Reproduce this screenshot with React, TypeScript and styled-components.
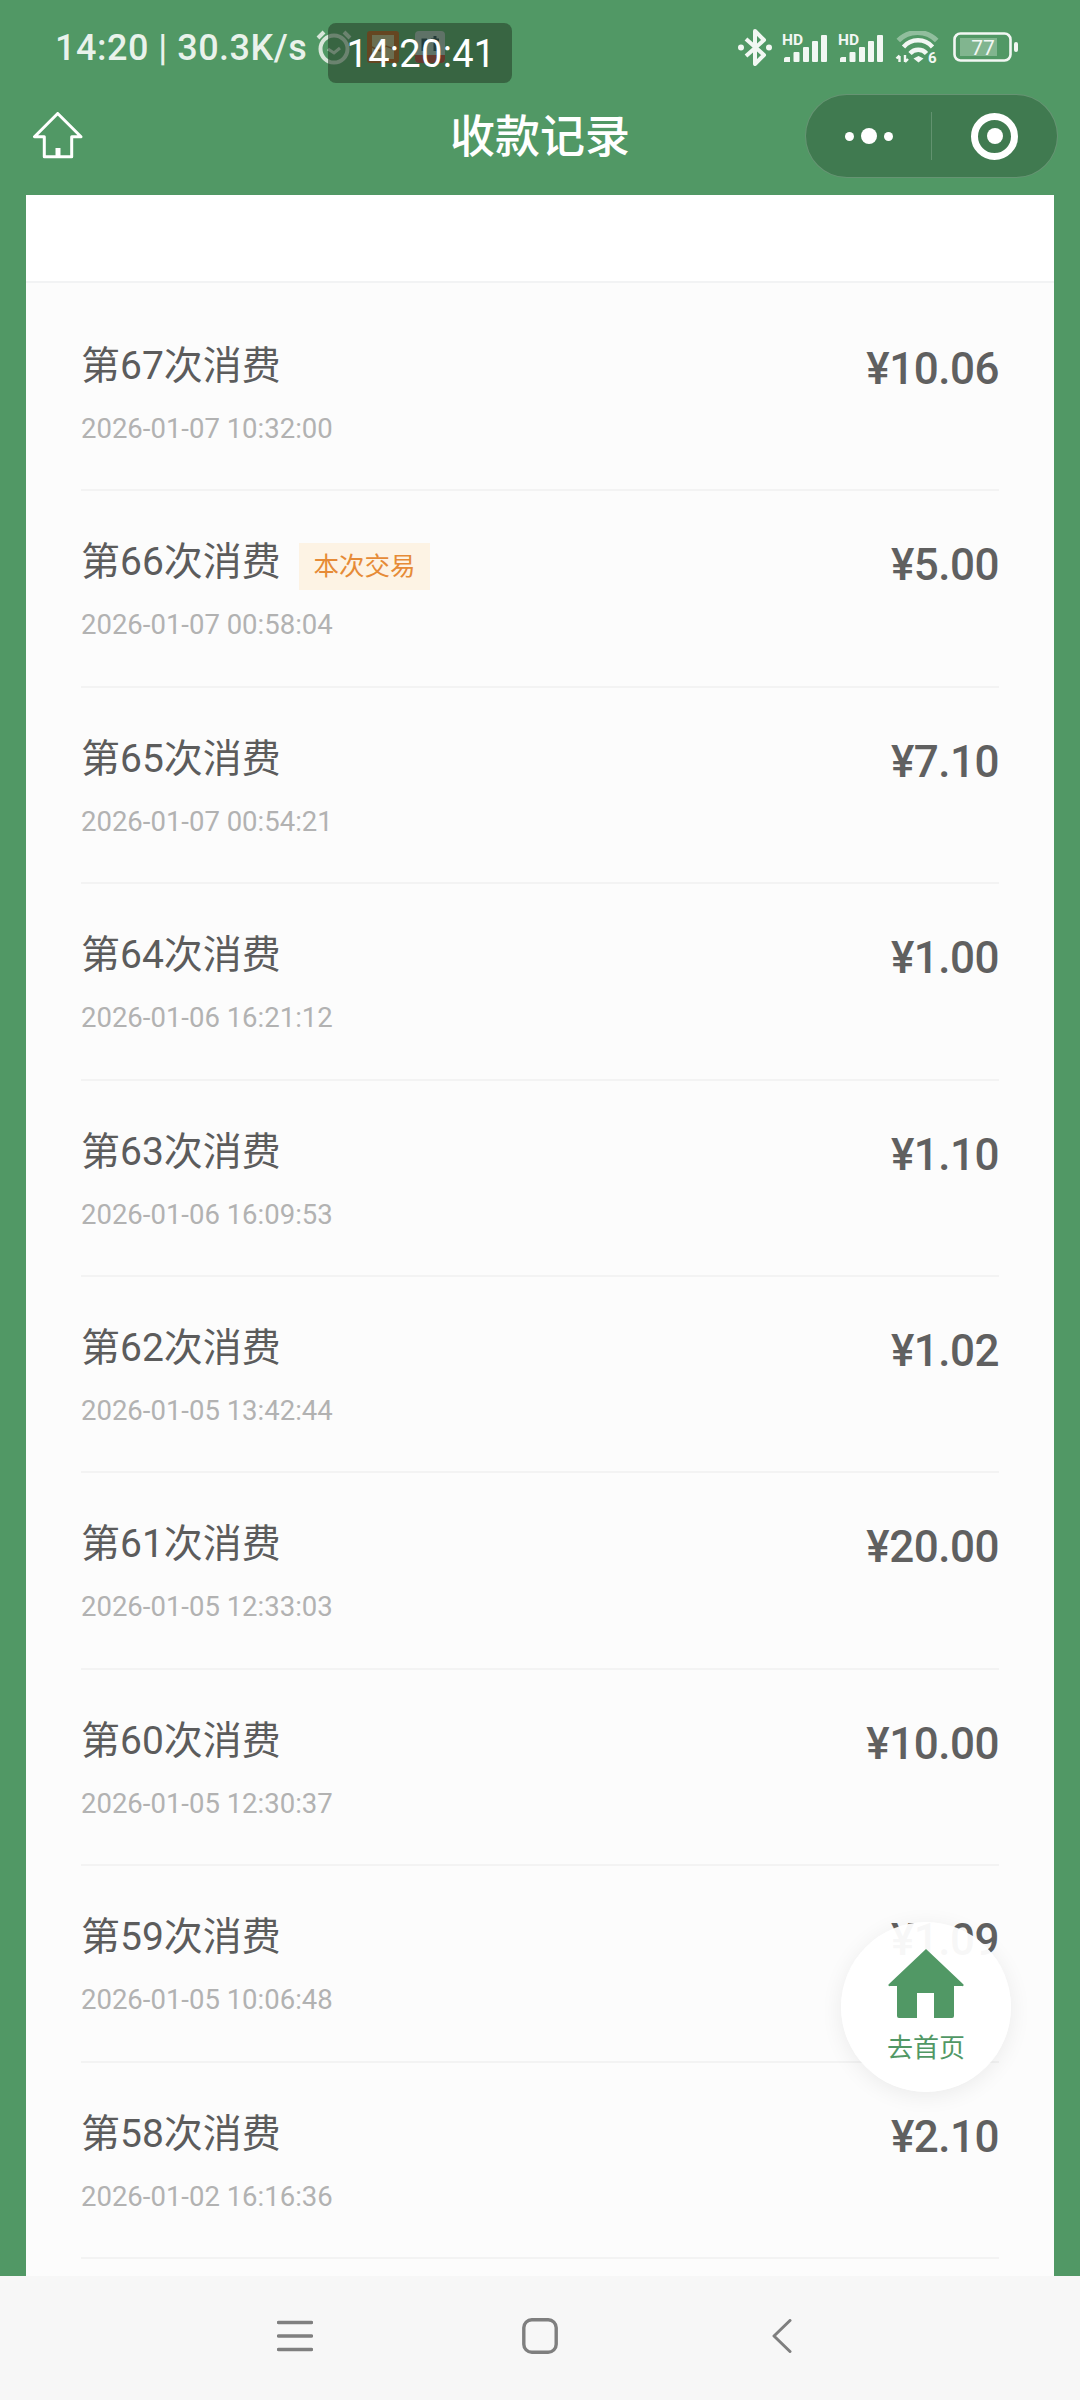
import styled, { createGlobalStyle } from "styled-components";

const GlobalStyle = createGlobalStyle`
  html, body {
    margin: 0;
    padding: 0;
    background: #52985f;
  }
  * {
    box-sizing: border-box;
  }
`;

const FONT = `Roboto, "Noto Sans CJK SC", sans-serif`;

const Page = styled.div`
  width: 1080px;
  height: 2400px;
  position: relative;
  display: flex;
  flex-direction: column;
  overflow: hidden;
  background: #519865;
  font-family: ${FONT};
`;

const StatusBar = styled.div`
  height: 94px;
  flex: none;
  padding: 28px 61px 0 55px;
  display: flex;
  justify-content: space-between;
  align-items: flex-start;
  color: rgba(255, 255, 255, 0.88);
`;

const StatusLeft = styled.div`
  display: flex;
  align-items: center;
  height: 38px;
`;

const StatusText = styled.span`
  margin-top: 2px;
  font-size: 36px;
  font-weight: 500;
  line-height: 38px;
  white-space: nowrap;
  letter-spacing: 0.5px;
`;

const AppIcon = styled.svg<{ $gap: number }>`
  flex: none;
  margin-left: ${(p) => p.$gap}px;
`;

const StatusRight = styled.div`
  display: flex;
  align-items: center;
  gap: 9px;
  height: 38px;
`;

const TimePill = styled.div`
  position: absolute;
  left: 328px;
  top: 23px;
  width: 184px;
  height: 60px;
  padding-left: 2px;
  border-radius: 8px;
  background: rgba(40, 70, 45, 0.62);
  color: #fff;
  font-size: 38px;
  line-height: 62px;
  text-align: center;
  letter-spacing: 0.3px;
`;

const NavBar = styled.div`
  height: 101px;
  flex: none;
  position: relative;
  display: flex;
  align-items: center;
  justify-content: space-between;
  padding: 0 22px 0 33px;
`;

const NavTitle = styled.div`
  position: absolute;
  left: 0;
  right: 0;
  top: 18px;
  text-align: center;
  color: #fff;
  font-size: 45px;
  font-weight: 500;
  line-height: 52px;
`;

const Capsule = styled.div`
  width: 253px;
  height: 84px;
  margin-bottom: 17px;
  border-radius: 42px;
  background: #407a50;
  border: 1px solid rgba(255, 255, 255, 0.2);
  display: flex;
  align-items: center;
`;

const CapsuleSide = styled.div<{ $wide: boolean }>`
  height: 48px;
  width: ${(p) => (p.$wide ? 127 : 126)}px;
  display: flex;
  align-items: center;
  justify-content: center;
  border-right: ${(p) => (p.$wide ? "1px solid rgba(255,255,255,0.18)" : "none")};
`;

const Dots = styled.div`
  display: flex;
  align-items: center;
  gap: 7px;
`;

const Dot = styled.span<{ $size: number }>`
  width: ${(p) => p.$size}px;
  height: ${(p) => p.$size}px;
  border-radius: 50%;
  background: #fff;
`;

const Target = styled.div`
  width: 47px;
  height: 47px;
  border-radius: 50%;
  border: 7.5px solid #fff;
  display: flex;
  align-items: center;
  justify-content: center;

  &::after {
    content: "";
    width: 16px;
    height: 16px;
    border-radius: 50%;
    background: #fff;
  }
`;

const Card = styled.div`
  flex: 1;
  min-height: 0;
  margin: 0 26px;
  background: #fcfcfc;
  overflow: hidden;
`;

const CardHead = styled.div`
  height: 88px;
  background: #fff;
  border-bottom: 2px solid #f2f3f4;
`;

const List = styled.div`
  padding: 12px 55px 0 55px;
`;

const Row = styled.div`
  height: 196.4px;
  padding-top: 49px;
  display: flex;
  justify-content: space-between;
  align-items: flex-start;
  border-bottom: 2px solid #f3f3f3;
`;

const RowTitleLine = styled.div`
  display: flex;
  align-items: center;
  height: 44px;
`;

const RowTitle = styled.span`
  font-size: 39px;
  line-height: 44px;
  color: #5c5c5c;
`;

const Tag = styled.span`
  margin-left: 18px;
  margin-top: 9px;
  height: 47px;
  padding: 0 14.5px;
  background: #fdf3e4;
  color: #e68b37;
  font-size: 25.5px;
  line-height: 46px;
`;

const RowDate = styled.div`
  margin-top: 23px;
  font-size: 27.5px;
  line-height: 36px;
  color: #b2b2b2;
`;

const Amount = styled.div`
  margin-top: 3px;
  font-size: 44px;
  font-weight: 500;
  line-height: 44px;
  letter-spacing: -0.5px;
  color: #606060;
`;

const HomeButton = styled.div`
  position: absolute;
  left: 841px;
  top: 1922px;
  width: 170px;
  height: 170px;
  border-radius: 50%;
  background: rgba(255, 255, 255, 0.95);
  box-shadow: 0 4px 22px rgba(0, 0, 0, 0.07);
  display: flex;
  flex-direction: column;
  align-items: center;
  padding-top: 27px;
`;

const HomeLabel = styled.div`
  margin-top: 12px;
  font-size: 26px;
  line-height: 34px;
  color: #519865;
`;

const BottomNav = styled.div`
  height: 124px;
  flex: none;
  background: #f7f7f7;
  display: grid;
  grid-template-columns: 295px 245px 242px;
  align-items: center;
  padding-bottom: 4px;
`;

const NavIcon = styled.svg`
  justify-self: end;
  transform: translateX(50%);
`;

const records = [
  { no: 67, time: "2026-01-07 10:32:00", amount: "10.06" },
  { no: 66, time: "2026-01-07 00:58:04", amount: "5.00", current: true },
  { no: 65, time: "2026-01-07 00:54:21", amount: "7.10" },
  { no: 64, time: "2026-01-06 16:21:12", amount: "1.00" },
  { no: 63, time: "2026-01-06 16:09:53", amount: "1.10" },
  { no: 62, time: "2026-01-05 13:42:44", amount: "1.02" },
  { no: 61, time: "2026-01-05 12:33:03", amount: "20.00" },
  { no: 60, time: "2026-01-05 12:30:37", amount: "10.00" },
  { no: 59, time: "2026-01-05 10:06:48", amount: "1.09" },
  { no: 58, time: "2026-01-02 16:16:36", amount: "2.10" },
];

const ICON = "#f2f7f3";

function Signal() {
  return (
    <svg width="47" height="31" viewBox="0 0 47 31">
      <text x="1" y="13" fontSize="15.5" fontWeight="700" fontFamily="Roboto, sans-serif" fill={ICON}>
        HD
      </text>
      <path d="M3 30v-3.5a2 2 0 0 1 2-1.5h4v5z" fill={ICON} />
      <rect x="12.5" y="20" width="6" height="10" rx="1" fill={ICON} />
      <rect x="22" y="15" width="6" height="15" rx="1" fill={ICON} />
      <rect x="31" y="9" width="6" height="21" rx="1" fill={ICON} />
      <rect x="40" y="3" width="6" height="27" rx="1" fill={ICON} />
    </svg>
  );
}

export default function App() {
  return (
    <Page>
      <GlobalStyle />
      <StatusBar>
        <StatusLeft>
          <StatusText>14:20 | 30.3K/s</StatusText>
          <AppIcon $gap={8} width="38" height="36" viewBox="0 0 38 36">
            <circle cx="19" cy="20" r="13.5" fill="none" stroke="#d8e6da" strokeWidth="4" />
            <path d="M13 20l6 4 6-5" fill="none" stroke="#d8e6da" strokeWidth="3" />
            <path d="M3 9l6-6M35 9l-6-6" stroke="#d8e6da" strokeWidth="4" />
          </AppIcon>
          <AppIcon $gap={14} width="32" height="32" viewBox="0 0 32 32">
            <rect width="32" height="32" rx="3" fill="#c9490f" />
            <rect x="5" y="4" width="22" height="24" fill="#d5b08c" />
            <path d="M5 16l8 4 6-5 8 3" fill="none" stroke="#a8441c" strokeWidth="1.5" />
          </AppIcon>
          <AppIcon $gap={16} width="30" height="32" viewBox="0 0 30 32">
            <rect width="30" height="32" rx="4" fill="#b9bcc4" />
            <path d="M8 20V9h4M20 5v15M16 9h8" fill="none" stroke="#1c2a4d" strokeWidth="3" />
            <path d="M0 24h30v4a4 4 0 0 1-4 4H4a4 4 0 0 1-4-4z" fill="#c7262f" />
          </AppIcon>
        </StatusLeft>
        <StatusRight>
          <svg width="34" height="37" viewBox="0 0 34 37">
            <path d="M8 10l18 16-9 9V2l9 9L8 27" fill="none" stroke={ICON} strokeWidth="4" strokeLinejoin="round" />
            <circle cx="3" cy="18.5" r="3" fill={ICON} />
            <circle cx="31" cy="18.5" r="3" fill={ICON} />
          </svg>
          <Signal />
          <Signal />
          <svg width="44" height="33" viewBox="0 0 44 33" style={{ marginLeft: 2 }}>
            <path d="M3.3 9.5a27 27 0 0 1 38.4 0" fill="none" stroke={ICON} strokeOpacity="0.4" strokeWidth="5" />
            <path d="M8.5 16a19 19 0 0 1 29 0" fill="none" stroke={ICON} strokeWidth="4.4" />
            <path d="M15 22.5a11 11 0 0 1 16.5 0" fill="none" stroke={ICON} strokeWidth="4.4" />
            <path d="M18.5 27.5l5-2.5 5 2.5-5 4z" fill={ICON} />
            <path d="M4.5 31v-6M1.5 27.5l3-3M10 24v7M10 31l3-3" fill="none" stroke={ICON} strokeWidth="2.4" />
            <text x="33" y="32" fontSize="15" fontWeight="700" fontFamily="Roboto, sans-serif" fill={ICON}>
              6
            </text>
          </svg>
          <svg width="66" height="30" viewBox="0 0 66 30" style={{ marginLeft: 5 }}>
            <rect x="1.5" y="1.5" width="56" height="27" rx="6" fill="none" stroke={ICON} strokeWidth="2.6" />
            <rect x="7" y="6" width="37" height="18" fill={ICON} fillOpacity="0.3" />
            <text x="30" y="23" fontSize="21" textAnchor="middle" fontFamily="Roboto, sans-serif" fill={ICON}>
              77
            </text>
            <rect x="61" y="10" width="4" height="10" rx="2" fill={ICON} />
          </svg>
        </StatusRight>
      </StatusBar>
      <TimePill>14:20:41</TimePill>

      <NavBar>
        <svg width="50" height="47" viewBox="0 0 50 47" style={{ marginBottom: 18 }}>
          <path
            d="M24.7 1.5L1.5 24.7H11.3V44.7H38.7V24.7H48Z"
            fill="none"
            stroke="#fff"
            strokeWidth="3"
            strokeLinejoin="round"
          />
          <path d="M25 44.7V36" fill="none" stroke="#fff" strokeWidth="5" />
        </svg>
        <NavTitle>收款记录</NavTitle>
        <Capsule>
          <CapsuleSide $wide>
            <Dots>
              <Dot $size={9} />
              <Dot $size={16} />
              <Dot $size={9} />
            </Dots>
          </CapsuleSide>
          <CapsuleSide $wide={false}>
            <Target />
          </CapsuleSide>
        </Capsule>
      </NavBar>

      <Card>
        <CardHead />
        <List>
          {records.map((r) => (
            <Row key={r.no}>
              <div>
                <RowTitleLine>
                  <RowTitle>第{r.no}次消费</RowTitle>
                  {r.current && <Tag>本次交易</Tag>}
                </RowTitleLine>
                <RowDate>{r.time}</RowDate>
              </div>
              <Amount>¥{r.amount}</Amount>
            </Row>
          ))}
        </List>
      </Card>

      <BottomNav>
        <NavIcon width="36" height="32" viewBox="0 0 36 32">
          <path d="M1.5 2.5H34.5M1.5 16H34.5M1.5 29.5H34.5" stroke="#7f7f7f" strokeWidth="3.4" strokeLinecap="round" />
        </NavIcon>
        <NavIcon width="36" height="36" viewBox="0 0 36 36">
          <rect x="1.8" y="1.8" width="32.4" height="32.4" rx="8" fill="none" stroke="#7f7f7f" strokeWidth="3.4" />
        </NavIcon>
        <NavIcon width="20" height="34" viewBox="0 0 20 34">
          <path d="M18 1.5L2 17L18 32.5" fill="none" stroke="#7f7f7f" strokeWidth="3" strokeLinecap="round" strokeLinejoin="round" />
        </NavIcon>
      </BottomNav>

      <HomeButton>
        <svg width="76" height="70" viewBox="0 0 76 70">
          <path
            d="M38 0L75 35a1 1 0 0 1-1 2H66V67a2 2 0 0 1-2 2H46V44H29V69H11a2 2 0 0 1-2-2V37H2a1 1 0 0 1-1-2Z"
            fill="#519865"
          />
        </svg>
        <HomeLabel>去首页</HomeLabel>
      </HomeButton>
    </Page>
  );
}
